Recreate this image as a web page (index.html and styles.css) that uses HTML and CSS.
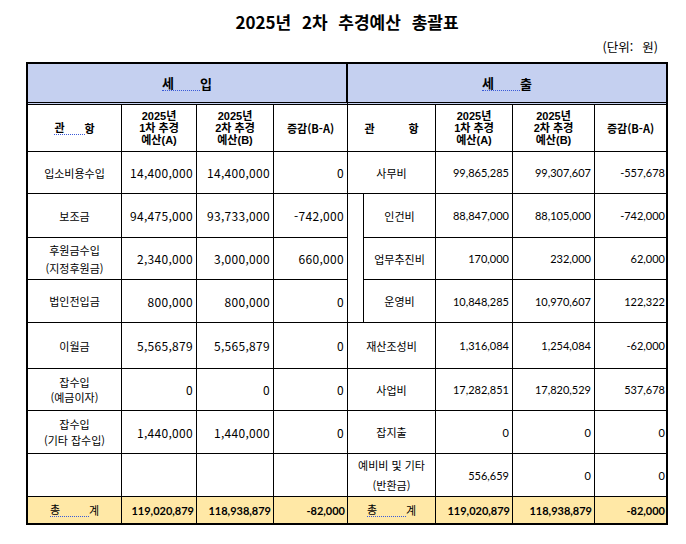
FILE: index.html
```html
<!DOCTYPE html>
<html lang="ko">
<head>
<meta charset="utf-8">
<title>2025년 2차 추경예산 총괄표</title>
<link rel="stylesheet" href="styles.css">
</head>
<body>
<div class="page">
  <div class="title">2025년 2차 추경예산 총괄표</div>
  <div class="unit">(단위:&nbsp; 원)</div>
  <div class="sheet">
    <div class="c band band-in"><span class="typo gap-band">세</span>입</div>
    <div class="c band band-out last"><span class="typo gap-band">세</span>출</div>

    <div class="c head"><span class="typo gap-head">관</span>항</div>
    <div class="c head"><div class="stack">2025년<br>1차 추경<br>예산(A)</div></div>
    <div class="c head"><div class="stack">2025년<br>2차 추경<br>예산(B)</div></div>
    <div class="c head">증감(B-A)</div>
    <div class="c head span2"><span class="gap-head2">관</span>항</div>
    <div class="c head"><div class="stack">2025년<br>1차 추경<br>예산(A)</div></div>
    <div class="c head"><div class="stack">2025년<br>2차 추경<br>예산(B)</div></div>
    <div class="c head last">증감(B-A)</div>

    <div class="c lbl">입소비용수입</div>
    <div class="c num">14,400,000</div>
    <div class="c num">14,400,000</div>
    <div class="c num">0</div>
    <div class="c lbl span2">사무비</div>
    <div class="c rnum">99,865,285</div>
    <div class="c rnum">99,307,607</div>
    <div class="c rnum last">-557,678</div>

    <div class="c lbl">보조금</div>
    <div class="c num">94,475,000</div>
    <div class="c num">93,733,000</div>
    <div class="c num">-742,000</div>
    <div class="c indent"></div>
    <div class="c lbl">인건비</div>
    <div class="c rnum">88,847,000</div>
    <div class="c rnum">88,105,000</div>
    <div class="c rnum last">-742,000</div>

    <div class="c lbl"><div class="two lh18">후원금수입<br>(지정후원금)</div></div>
    <div class="c num">2,340,000</div>
    <div class="c num">3,000,000</div>
    <div class="c num">660,000</div>
    <div class="c lbl">업무추진비</div>
    <div class="c rnum">170,000</div>
    <div class="c rnum">232,000</div>
    <div class="c rnum last">62,000</div>

    <div class="c lbl">법인전입금</div>
    <div class="c num">800,000</div>
    <div class="c num">800,000</div>
    <div class="c num">0</div>
    <div class="c lbl">운영비</div>
    <div class="c rnum">10,848,285</div>
    <div class="c rnum">10,970,607</div>
    <div class="c rnum last">122,322</div>

    <div class="c lbl">이월금</div>
    <div class="c num">5,565,879</div>
    <div class="c num">5,565,879</div>
    <div class="c num">0</div>
    <div class="c lbl span2">재산조성비</div>
    <div class="c rnum">1,316,084</div>
    <div class="c rnum">1,254,084</div>
    <div class="c rnum last">-62,000</div>

    <div class="c lbl"><div class="two lh15">잡수입<br>(예금이자)</div></div>
    <div class="c num">0</div>
    <div class="c num">0</div>
    <div class="c num">0</div>
    <div class="c lbl span2">사업비</div>
    <div class="c rnum">17,282,851</div>
    <div class="c rnum">17,820,529</div>
    <div class="c rnum last">537,678</div>

    <div class="c lbl"><div class="two lh16">잡수입<br>(기타 잡수입)</div></div>
    <div class="c num">1,440,000</div>
    <div class="c num">1,440,000</div>
    <div class="c num">0</div>
    <div class="c lbl span2">잡지출</div>
    <div class="c rnum">0</div>
    <div class="c rnum">0</div>
    <div class="c rnum last">0</div>

    <div class="c"></div>
    <div class="c"></div>
    <div class="c"></div>
    <div class="c"></div>
    <div class="c lbl span2"><div class="two lh20">예비비 및 기타<br>(반환금)</div></div>
    <div class="c rnum">556,659</div>
    <div class="c rnum">0</div>
    <div class="c rnum last">0</div>

    <div class="c total lbl"><span class="typo gap-total">총</span>계</div>
    <div class="c total tnum">119,020,879</div>
    <div class="c total tnum">118,938,879</div>
    <div class="c total tnum">-82,000</div>
    <div class="c total lbl span2"><span class="typo gap-total">총</span>계</div>
    <div class="c total tnum">119,020,879</div>
    <div class="c total tnum">118,938,879</div>
    <div class="c total tnum last">-82,000</div>
  </div>
</div>
</body>
</html>
```
FILE: styles.css
```css
* { box-sizing: border-box; }
html, body { margin: 0; padding: 0; background: #fff; }
body {
  font-family: "Noto Sans CJK KR", "Noto Sans", sans-serif;
  color: #000;
}
.page {
  width: 642px;
  margin-left: 26px;
}
.title {
  padding-top: 8px;
  height: 39px;
  line-height: 27px;
  text-align: center;
  font-size: 17px;
  font-weight: 700;
  word-spacing: 6px;
}
.unit {
  height: 23px;
  line-height: 16px;
  text-align: right;
  padding-right: 10px;
  font-size: 12.5px;
  word-spacing: 1px;
}
.sheet {
  display: grid;
  grid-template-columns: 94px 75px 77px 74px 16px 72px 77px 82px 71px;
  grid-template-rows: 41px 47px 42px 44px 42px 43px 46px 42px 43px 43px 26px;
  border: 2px solid #000;
}
.c {
  border-right: 1px solid #000;
  border-bottom: 1px solid #000;
  display: flex;
  align-items: center;
  justify-content: center;
  background: #fff;
  font-size: 11px;
  white-space: nowrap;
  overflow: hidden;
}
.last { border-right: none; }
.band {
  background: #c5d0f0;
  border-bottom: 3px double #000;
  font-size: 13px;
  font-weight: 700;
}
.band-in { grid-column: span 4; border-right-width: 2px; }
.band-out { grid-column: span 5; }
.head {
  font-weight: 700;
  font-size: 11px;
  text-align: center;
}
.stack {
  font-family: "Liberation Sans", "Noto Sans CJK KR", sans-serif;
  font-size: 11px;
  line-height: 12px;
}
.span2 { grid-column: span 2; }
.indent { grid-row: span 3; }
.lbl { text-align: center; }
.two { text-align: center; }
.lh15 { line-height: 15px; }
.lh16 { line-height: 16px; }
.lh18 { line-height: 18px; }
.lh20 { line-height: 20px; }
.num {
  justify-content: flex-end;
  padding-right: 3px;
  font-size: 12px;
  letter-spacing: 0.3px;
}
.rnum {
  justify-content: flex-end;
  padding-right: 3px;
  font-family: Lato, "Noto Sans", sans-serif;
  font-size: 11px;
}
.rnum.last { padding-right: 1px; }
.total {
  background: #ffe8a6;
  border-bottom: none;
}
.tnum {
  justify-content: flex-end;
  padding-right: 2px;
  font-family: Lato, "Noto Sans", sans-serif;
  font-size: 11px;
  font-weight: 700;
}
.tnum.last { padding-right: 1px; }
.typo {
  display: inline-block;
  line-height: 1;
  padding-bottom: 1px;
  border-bottom: 1px dotted #3a5ad8;
}
.gap-band { padding-right: 26px; }
.gap-head { padding-right: 20px; }
.gap-head2 { padding-right: 34px; }
.gap-total { padding-right: 29px; }
```
